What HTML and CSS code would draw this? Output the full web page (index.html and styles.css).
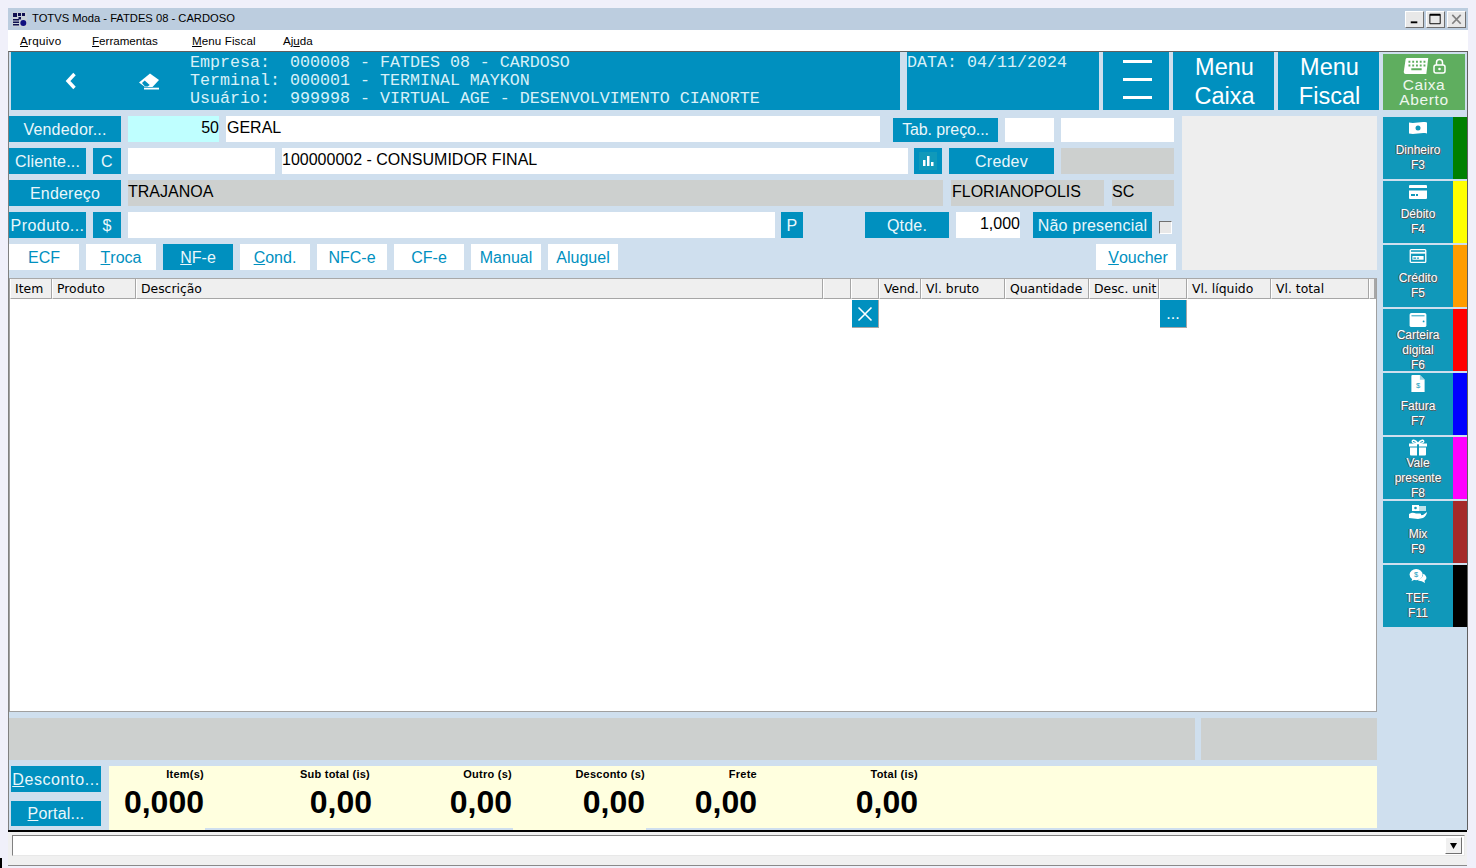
FILE: index.html
```html
<!DOCTYPE html>
<html lang="pt">
<head>
<meta charset="utf-8">
<title>TOTVS Moda - FATDES 08 - CARDOSO</title>
<link rel="stylesheet" href="styles.css">
</head>
<body>
<div class="window">
  <div class="titlebar">
    <svg class="app-icon" viewBox="0 0 15 15"><rect width="15" height="15" fill="#c8d0d8"/><path d="M1 1h4v4H1zM6 1h3v3H6zM10 1h3v3h-3zM1 7h6v1.500H1zM1 9.500h6V11H1zM1 12h6v1.500H1z" fill="#101050"/><circle cx="11.300" cy="11" r="3" fill="#101080"/><rect x="6.500" y="5" width="2.500" height="2.500" fill="#101050"/></svg>
    <span class="title-text">TOTVS Moda - FATDES 08 - CARDOSO</span>
    <div class="win-buttons">
      <span class="win-btn"><svg viewBox="0 0 18 16"><rect x="5" y="10" width="7" height="2" fill="#000"/></svg></span>
      <span class="win-btn"><svg viewBox="0 0 18 16"><path d="M3 2.500h11v10H3z" fill="none" stroke="#000"/><rect x="3" y="2" width="11" height="2" fill="#000"/></svg></span>
      <span class="win-btn"><svg viewBox="0 0 18 16"><path d="M4.500 3l9 9.500M13.500 3l-9 9.500" stroke="#808080" stroke-width="1.800" fill="none"/></svg></span>
    </div>
  </div>
  <div class="menubar">
    <span class="menu-item m-arquivo"><u>A</u>rquivo</span>
    <span class="menu-item m-ferr"><u>F</u>erramentas</span>
    <span class="menu-item m-fiscal"><u>M</u>enu Fiscal</span>
    <span class="menu-item">Aj<u>u</u>da</span>
  </div>
  <div class="client">
    <div class="header">
      <div class="hd-main">
        <svg class="hd-back" viewBox="0 0 14 18"><path d="M10.500 2L4 9l6.500 7" fill="none" stroke="#fff" stroke-width="3.400"/></svg>
        <svg class="hd-eraser" viewBox="0 0 22 18"><path d="M12 1.500L21 8l-6.500 7H7L1 10.500z" fill="#fff"/><path d="M6.700 8.500l5 4.500-2 1.500H7l-3-3.500z" fill="#0090bf"/><rect x="6" y="15.700" width="15" height="1.800" fill="#fff"/></svg>
        <div class="hd-info">Empresa:  000008 - FATDES 08 - CARDOSO
Terminal: 000001 - TERMINAL MAYKON
Usuário:  999998 - VIRTUAL AGE - DESENVOLVIMENTO CIANORTE</div>
      </div>
      <div class="hd-date">DATA: 04/11/2024</div>
      <div class="hd-burger"><i></i><i></i><i></i></div>
      <div class="hd-menu">Menu<br>Caixa</div>
      <div class="hd-menu">Menu<br>Fiscal</div>
      <div class="hd-caixa">
        <div class="caixa-icons">
          <svg class="kb" viewBox="0 0 26 17"><path d="M3 0h23l-2 17H2a2 2 0 0 1-2-2L2 1z" fill="#fff"/><path d="M5 3h2v2H5zM9 3h2v2H9zM13 3h2v2h-2zM17 3h2v2h-2zM21 3h2v2h-2zM5 7h2v2H5zM9 7h2v2H9zM13 7h2v2h-2zM17 7h2v2h-2zM21 7h2v2h-2zM8 11h11v2H8z" fill="#5fae5f"/></svg>
          <svg class="lock" viewBox="0 0 13 16"><path d="M3.500 7V4.500a3 3 0 0 1 6 0V7" fill="none" stroke="#fff" stroke-width="1.500"/><rect x="1" y="7" width="11" height="8" rx="2" fill="none" stroke="#fff" stroke-width="1.500"/><circle cx="6.500" cy="11" r="1.300" fill="#fff"/></svg>
        </div>
        <div class="caixa-text">Caixa<br>Aberto</div>
      </div>
    </div>

    <div class="body">
      <div class="work">
        <div class="top">
          <div class="fields">
            <div class="row">
              <span class="btn w112">Vendedor...</span>
              <span class="inp cyan right w91">50</span>
              <span class="inp pl1 w654">GERAL</span>
              <span class="btn short narrow w105 ml6">Tab. preço...</span>
              <span class="inp short w49"></span>
              <span class="inp short w113"></span>
            </div>
            <div class="row">
              <span class="btn w77">Cliente...</span>
              <span class="btn w28">C</span>
              <span class="inp w147"></span>
              <span class="inp w626">100000002 - CONSUMIDOR FINAL</span>
              <span class="btn w28 mlm1"><svg class="chart" viewBox="0 0 18 18"><rect width="18" height="18" fill="#1099ba"/><path d="M4 8h2.500v6H4zM8 4h2.500v10H8zM12 10h2.500v4H12z" fill="#fff"/></svg></span>
              <span class="btn w105">Credev</span>
              <span class="inp gray w113"></span>
            </div>
            <div class="row">
              <span class="btn w112">Endereço</span>
              <span class="inp gray w815">TRAJANOA</span>
              <span class="inp gray pl1 w153 ml1">FLORIANOPOLIS</span>
              <span class="inp gray w62 ml1">SC</span>
            </div>
            <div class="row">
              <span class="btn w77 wide">Produto...</span>
              <span class="btn w28">$</span>
              <span class="inp w647"></span>
              <span class="btn w22 mlm1">P</span>
              <span class="btn w84 ml55">Qtde.</span>
              <span class="inp right w64">1,000</span>
              <span class="btn w119 ml6">Não presencial</span>
              <span class="check"></span>
            </div>
            <div class="row">
              <span class="tab">ECF</span>
              <span class="tab"><u>T</u>roca</span>
              <span class="tab on"><u>N</u>F-e</span>
              <span class="tab"><u>C</u>ond.</span>
              <span class="tab">NFC-e</span>
              <span class="tab">CF-e</span>
              <span class="tab">Manual</span>
              <span class="tab">Aluguel</span>
              <span class="tab voucher"><u>V</u>oucher</span>
            </div>
          </div>
          <div class="panel"></div>
        </div>

        <div class="grid">
          <div class="gh">Item</div>
          <div class="gh">Produto</div>
          <div class="gh">Descrição</div>
          <div class="gh"></div>
          <div class="gh"></div>
          <div class="gh">Vend.</div>
          <div class="gh">Vl. bruto</div>
          <div class="gh">Quantidade</div>
          <div class="gh">Desc. unit</div>
          <div class="gh"></div>
          <div class="gh">Vl. líquido</div>
          <div class="gh">Vl. total</div>
          <div class="gh gh-end"></div>
          <div class="gbtn c5"><svg viewBox="0 0 16 16"><path d="M1.500 1.500l13 13M14.500 1.500l-13 13" stroke="#fff" stroke-width="1.600" fill="none"/></svg></div>
          <div class="gbtn c10">...</div>
        </div>

        <div class="messages">
          <div class="msg-a"></div>
          <div class="msg-b"></div>
        </div>

        <div class="bottom">
          <div class="bottom-btns">
            <span class="btn b-desc"><u>D</u>esconto...</span>
            <span class="btn b-port"><u>P</u>ortal...</span>
          </div>
          <div class="totals">
            <div class="tot-cells">
              <div class="tot t1"><div class="tot-l">Item(s)</div><div class="tot-v">0,000</div></div>
              <div class="tot t2"><div class="tot-l">Sub total (is)</div><div class="tot-v out2">0,00</div></div>
              <div class="tot t3"><div class="tot-l">Outro (s)</div><div class="tot-v">0,00</div></div>
              <div class="tot t4"><div class="tot-l">Desconto (s)</div><div class="tot-v">0,00</div></div>
              <div class="tot t5"><div class="tot-l">Frete</div><div class="tot-v">0,00</div></div>
              <div class="tot t6"><div class="tot-l">Total (is)</div><div class="tot-v">0,00</div></div>
            </div>
            <div class="tot-foot"><i class="f1"></i><b class="f2"></b><i class="f3"></i><b class="f4"></b></div>
          </div>
        </div>
      </div>

      <div class="side">
        <div class="pay"><div class="pay-main"><svg class="pi" viewBox="0 0 18 14"><path d="M0 1.500c6 1.500 12-1.500 18 0v11c-6-1.500-12 1.500-18 0z" fill="#fff"/><circle cx="9" cy="7" r="2.500" fill="#1098ba"/></svg><div class="pay-t">Dinheiro<br>F3</div></div><i class="s-green"></i></div>
        <div class="pay"><div class="pay-main"><svg class="pi" viewBox="0 0 18 14"><path d="M1 0h16a1 1 0 0 1 1 1v2H0V1a1 1 0 0 1 1-1zM0 5.500h18V13a1 1 0 0 1-1 1H1a1 1 0 0 1-1-1z" fill="#fff"/><path d="M2 9h4v2H2zM7 9h2v2H7z" fill="#1098ba"/></svg><div class="pay-t">Débito<br>F4</div></div><i class="s-yellow"></i></div>
        <div class="pay"><div class="pay-main"><svg class="pi" viewBox="0 0 18 15"><rect x=".7" y=".7" width="16.600" height="13.600" rx="1" fill="none" stroke="#fff" stroke-width="1.400"/><rect x="1" y="3" width="16" height="2" fill="#fff"/><rect x="3" y="7.500" width="12" height="4" fill="#fff"/><path d="M4 9h3v1.500H4zM8 9h2v1.500H8z" fill="#1098ba"/></svg><div class="pay-t">Crédito<br>F5</div></div><i class="s-orange"></i></div>
        <div class="pay"><div class="pay-main"><svg class="pi" viewBox="0 0 18 15"><path d="M2 0h14a2 2 0 0 1 2 2v11a2 2 0 0 1-2 2H2a2 2 0 0 1-2-2V2a2 2 0 0 1 2-2z" fill="#fff"/><path d="M2 3h14" stroke="#1098ba"/><circle cx="15" cy="9" r="1" fill="#1098ba"/></svg><div class="pay-t">Carteira<br>digital<br>F6</div></div><i class="s-red"></i></div>
        <div class="pay"><div class="pay-main"><svg class="pi tall" viewBox="0 0 14 18"><path d="M1 0h8l5 5v13H0V1a1 1 0 0 1 1-1z" fill="#fff"/><path d="M9 0v5h5z" fill="#9fd4e2"/><text x="7" y="14" font-size="8" text-anchor="middle" fill="#1098ba" font-family="Liberation Sans">$</text></svg><div class="pay-t">Fatura<br>F7</div></div><i class="s-blue"></i></div>
        <div class="pay"><div class="pay-main"><svg class="pi tall" viewBox="0 0 18 16"><path d="M0 4h8v3H0zM10 4h8v3h-8zM1 8h7v8H2a1 1 0 0 1-1-1zM10 8h7v7a1 1 0 0 1-1 1h-6z" fill="#fff"/><path d="M9 4C6 0 2.500 0 3.500 2.500 4 3.500 6 4 9 4c3 0 5-.5 5.500-1.500C15.500 0 12 0 9 4z" fill="none" stroke="#fff" stroke-width="1.500"/></svg><div class="pay-t">Vale<br>presente<br>F8</div></div><i class="s-magenta"></i></div>
        <div class="pay"><div class="pay-main"><svg class="pi" viewBox="0 0 18 14"><path d="M3 0h7v6H3z" fill="#fff"/><path d="M10 1h7v5h-7z" fill="#bfe3ec"/><circle cx="6.500" cy="3" r="1.300" fill="#1098ba"/><path d="M0 9c3-2 5-1.500 7-.5h4c1.500 0 1.500 2 0 2H8l6-.5 4-3c0 2.500-2 5-4 6l-5 1-9-1z" fill="#fff"/></svg><div class="pay-t">Mix<br>F9</div></div><i class="s-brown"></i></div>
        <div class="pay"><div class="pay-main"><svg class="pi" viewBox="0 0 18 15"><ellipse cx="7" cy="6" rx="7" ry="6" fill="#fff"/><path d="M3 10l-1 3 4-2z" fill="#fff"/><path d="M14.500 5c2.500 1 3.500 3 3.500 4.500S17 12 16 12.500l.5 2.500-3.500-2c-2 0-4-.5-5-1.500 3 0 7-3 6.500-6.500z" fill="#fff"/><text x="7" y="9" font-size="8" text-anchor="middle" fill="#1098ba" font-family="Liberation Sans">$</text></svg><div class="pay-t">TEF.<br>F11</div></div><i class="s-black"></i></div>
      </div>
    </div>
  </div>
  <div class="statusbar">
    <div class="combo"><span class="combo-arrow"><svg viewBox="0 0 9 6"><path d="M1 0h7L4.500 6z" fill="#000"/></svg></span></div>
  </div>
</div>
</body>
</html>
```

FILE: styles.css
```css
* { box-sizing: border-box; }
html, body { margin: 0; height: 868px; overflow: hidden; }
body {
  background: #f0f0fa;
  padding: 8px 8px 0;
  font-family: "Liberation Sans", Arial, sans-serif;
  position: relative;
}
body::after {
  content: ""; position: absolute; left: 0; top: 858px; width: 2px; height: 10px; background: #000;
}
.window { width: 1460px; height: 858px; display: flex; flex-direction: column; }

.titlebar {
  height: 22px; background: #bccddf; display: flex; align-items: center;
  padding-left: 4px; position: relative; flex: none;
}
.app-icon { width: 15px; height: 15px; margin-right: 5px; }
.title-text { font-size: 11.2px; color: #000; margin-top: -2px; }
.win-buttons { margin-left: auto; display: flex; gap: 2px; padding-right: 2px; }
.win-btn {
  width: 19px; height: 17px; background: #e8e8e8; display: block;
  border: 1px solid; border-color: #fff #707070 #707070 #fff;
}
.win-btn svg { display: block; width: 100%; height: 100%; }

.menubar {
  height: 21px; background: #fff; display: flex; align-items: center;
  padding-left: 12px; font-size: 11.6px; color: #000; flex: none;
}
.menu-item { display: block; }
.m-arquivo { width: 72px; letter-spacing: .3px; }
.m-ferr { width: 100px; }
.m-fiscal { width: 91px; letter-spacing: .1px; }

.client {
  height: 779px; width: 1460px; background: #cfdfee; flex: none;
  border-top: 1px solid #606060; border-left: 1px solid #808080;
  border-right: 1px solid #606060;
}
.header { display: flex; height: 58px; margin-left: 2px; gap: 4px; }
.hd-main {
  width: 889px; background: #0090bf; position: relative;
  display: flex; align-items: center; margin-right: 3px;
}
.hd-back { width: 14px; height: 18px; margin-left: 53px; }
.hd-eraser { width: 22px; height: 18px; margin-left: 60px; }
.hd-info, .hd-date {
  font-family: "Liberation Mono", "Courier New", monospace; font-size: 16.66px;
  line-height: 18px; color: #d8f0f8; white-space: pre;
}
.hd-info { margin-left: 30px; margin-top: 0; }
.hd-date { width: 192px; background: #0090bf; padding: 2px 0 0 0; }
.hd-burger {
  width: 66px; background: #0090bf; display: flex; flex-direction: column;
  align-items: center; gap: 15px; padding: 8px 0 0 2px;
}
.hd-burger i { display: block; width: 29px; height: 3px; background: #fff; }
.hd-menu {
  width: 101px; background: #0090bf; color: #fff; text-align: center;
  font-size: 23.5px; line-height: 29px; padding: 1px 0 0 2px;
}
.hd-caixa {
  width: 82px; height: 56px; margin-top: 2px; background: #5fae5f; color: #eef7ee;
  text-align: center;
}
.caixa-icons { display: flex; justify-content: center; gap: 4px; padding-top: 4px; height: 23px; }
.kb { width: 26px; height: 16px; }
.lock { width: 13px; height: 16px; }
.caixa-text { font-size: 15.5px; line-height: 14.5px; margin-top: 1px; letter-spacing: .6px; }

.body { display: flex; gap: 6px; margin-top: 6px; }
.work { width: 1368px; }
.top { display: flex; gap: 6px; height: 154px; }
.fields { width: 1167px; display: flex; flex-direction: column; gap: 6px; }
.panel { width: 195px; background: #eeeeee; }
.row { display: flex; height: 26px; gap: 7px; flex: none; }

.btn {
  display: flex; align-items: center; justify-content: center; flex: none;
  background: #0090bf; color: #eaf7fb; font-size: 16px; letter-spacing: .2px;
  height: 26px; white-space: nowrap; padding-top: 2px;
}
.inp {
  display: flex; align-items: center; background: #fff; color: #000; flex: none;
  font-size: 16px; height: 26px; padding: 0 0 2px; white-space: nowrap;
}
.pl1 { padding-left: 1px; }
.inp.right { justify-content: flex-end; }
.cyan { background: #bfffff; }
.gray { background: #cdd0cf; }
.short { height: 24px; margin-top: 2px; }
.wide { letter-spacing: .45px; }
.narrow { letter-spacing: -.1px; padding-top: 0; }
.w22 { width: 22px; } .w28 { width: 28px; } .w49 { width: 49px; } .w62 { width: 62px; }
.w64 { width: 64px; } .w77 { width: 77px; } .w84 { width: 84px; } .w91 { width: 91px; }
.w105 { width: 105px; } .w112 { width: 112px; } .w113 { width: 113px; } .w119 { width: 119px; }
.w147 { width: 147px; } .w153 { width: 153px; } .w626 { width: 626px; } .w647 { width: 647px; }
.w654 { width: 654px; } .w815 { width: 815px; }
.ml1 { margin-left: 1px; } .ml6 { margin-left: 6px; } .ml55 { margin-left: 55px; } .mlm1 { margin-left: -1px; }
.chart { width: 18px; height: 18px; margin-top: -2px; }
.check {
  width: 13px; height: 13px; margin-top: 9px; background: #e8e8e8;
  border: 1px solid; border-color: #707070 #fff #fff #707070; flex: none;
}

.tab {
  width: 70px; height: 26px; background: #fff; color: #0090bf; font-size: 16px;
  display: flex; align-items: center; justify-content: center; padding-top: 2px;
}
.tab.on { background: #0090bf; color: #eaf7fb; }
.voucher { margin-left: auto; width: 80px; padding-left: 4px; }

.grid {
  margin-top: 8px; height: 434px; background: #fff;
  border: 1px solid #a0a0a0; border-top-color: #a8a8a8; border-right-color: #a0a0a0;
  display: grid; align-content: start;
  grid-template-columns: 42px 84px 687px 28px 28px 42px 84px 84px 70px 28px 84px 98px 1fr;
  grid-template-rows: 20px 28px;
}
.gh {
  background: #efefef; border-right: 1px solid #a6a6a6; border-bottom: 1px solid #a6a6a6;
  border-left: 1px solid #fff;
  font-family: "DejaVu Sans", sans-serif; font-size: 12.4px; line-height: 20px; color: #000;
  padding-left: 4px; white-space: nowrap; overflow: hidden;
}
.gh-end { border-right: 2px solid #a6a6a6; }
.gbtn {
  grid-row: 2; width: 27px; height: 28px; margin-left: 1px; background: #0090bf; color: #fff; border-right: 1px solid #a6a6a6;
  border-bottom: 1px solid #a6a6a6; display: flex; align-items: center; justify-content: center;
  font-size: 16px; margin-top: 1px;
}
.gbtn svg { width: 16px; height: 16px; }
.c5 { grid-column: 5; }
.c10 { grid-column: 10; }

.messages { display: flex; gap: 6px; margin-top: 6px; }
.msg-a { width: 1186px; height: 42px; background: #cdd0cf; }
.msg-b { width: 176px; height: 42px; background: #cdd0cf; }

.bottom { display: flex; margin-top: 6px; height: 64px; }
.bottom-btns { width: 100px; padding-left: 2px; position: relative; }
.b-desc { width: 90px; height: 26px; letter-spacing: .6px; }
.b-port { width: 90px; height: 25px; margin-top: 9px; padding-top: 1px; }
.totals { width: 1268px; height: 64px; background: #ffffdf; display: flex; flex-direction: column; }
.tot-cells { display: flex; height: 62px; }
.tot { text-align: right; color: #000; flex: none; }
.t1 { width: 95px; } .t2 { width: 166px; } .t3 { width: 142px; }
.t4 { width: 133px; } .t5 { width: 112px; } .t6 { width: 161px; }
.tot-l { font-size: 11px; font-weight: 700; line-height: 13px; padding-top: 2px; height: 15px; letter-spacing: .25px; }
.tot-v { font-size: 32px; font-weight: 700; line-height: 36px; margin-top: 3px; white-space: nowrap; }
.out2 { margin-right: -2px; }
.tot-foot { display: flex; height: 2px; }
.tot-foot i, .tot-foot b { display: block; height: 2px; }
.tot-foot b { background: #cfdfee; }
.f1 { width: 96px; } .f2 { width: 308px; } .f3 { width: 133px; } .f4 { width: 731px; }

.side { width: 84px; margin-top: 1px; display: flex; flex-direction: column; gap: 2px; }
.pay { display: flex; height: 62px; flex: none; }
.pay-main {
  width: 70px; background: #1098ba; display: flex; flex-direction: column; align-items: center;
}
.pay > i { display: block; width: 14px; }
.s-green { background: #008000; } .s-yellow { background: #ffff00; } .s-orange { background: #ff9c00; }
.s-red { background: #ff0000; } .s-blue { background: #0000ff; } .s-magenta { background: #ff00ff; }
.s-brown { background: #a52a2a; } .s-black { background: #000; }
.pi { width: 18px; height: 14px; margin-top: 4px; flex: none; }
.pi.tall { height: 17px; margin-top: 2px; margin-bottom: -1px; }
.pay-t {
  height: 42px; margin-top: 2px; flex: none; display: flex; align-items: center; justify-content: center;
  text-align: center; color: #fff; font-size: 12px; line-height: 15px;
  text-shadow: -1px 0 0 #5a5a5a, 1px 1px 0 #5a5a5a;
  white-space: nowrap;
}

.statusbar {
  width: 1459px; height: 36px; background: #f0f0f0; border-top: 2px solid #000; flex: none;
  padding: 3px 2px 0 4px; border-bottom: 1px solid #8a8a8a;
}
.combo {
  height: 21px; background: #fff; border: 1px solid; border-color: #808080 #e8e8e8 #e8e8e8 #808080;
  display: flex; justify-content: flex-end; padding: 1px 2px;
}
.combo-arrow {
  display: flex; align-items: center; justify-content: center; width: 17px; height: 17px;
  background: #f0f0f0; border: 1px solid; border-color: #fff #707070 #707070 #fff;
}
.combo-arrow svg { width: 9px; height: 6px; }
```
